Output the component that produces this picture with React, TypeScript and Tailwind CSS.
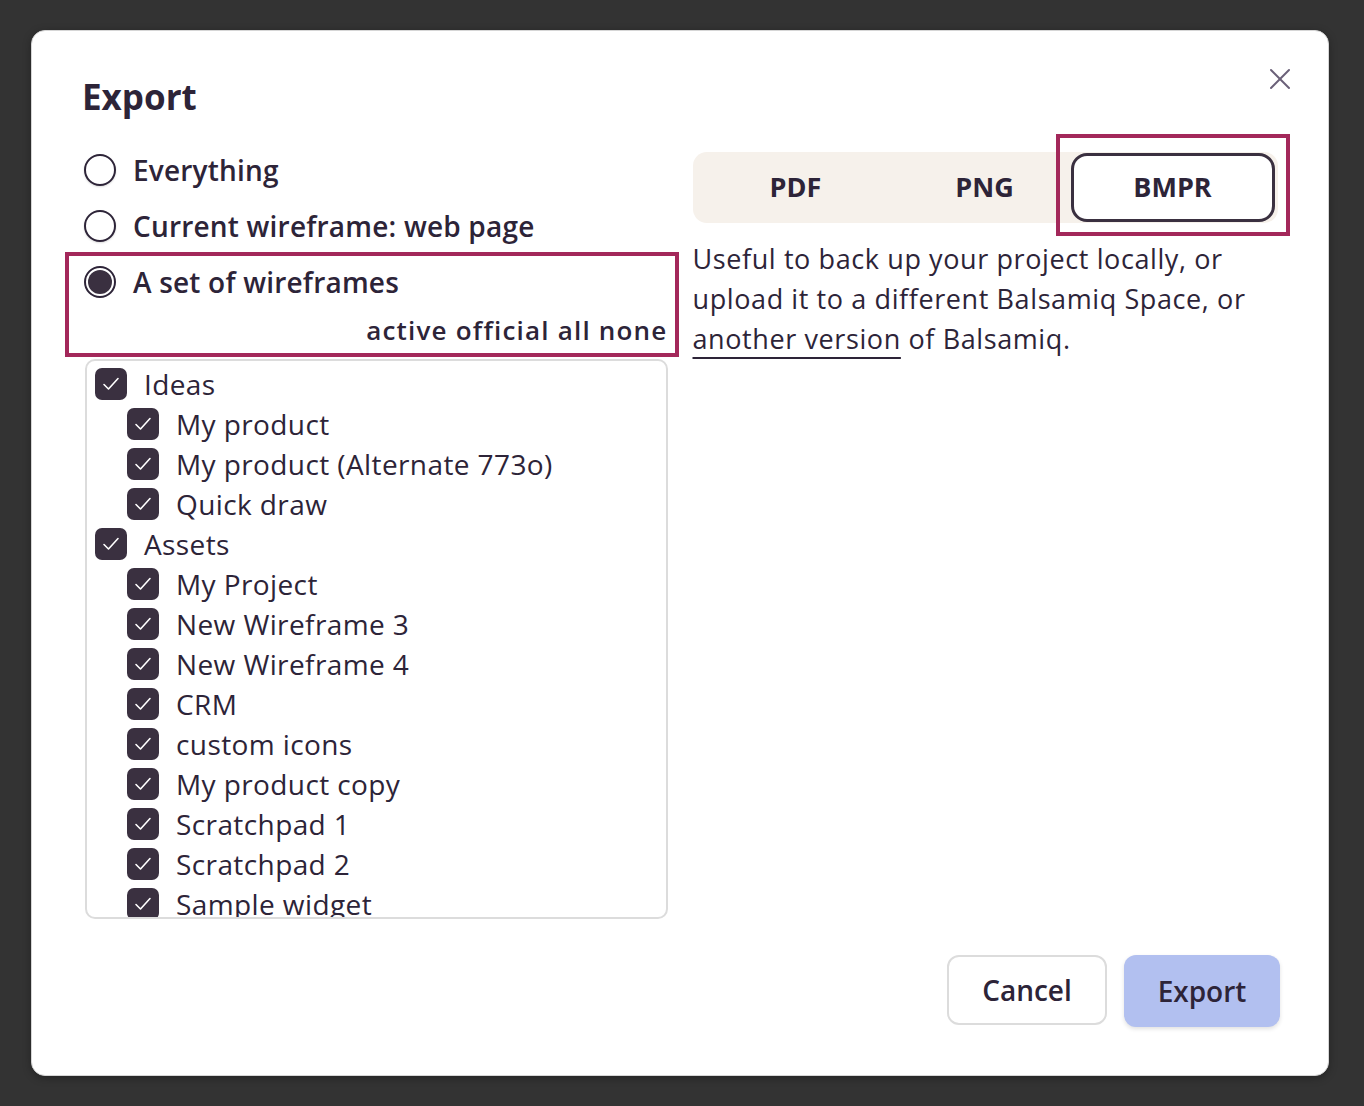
import { X } from "lucide-react";

type Item = { label: string; level: 0 | 1 };

const items: Item[] = [
  { label: "Ideas", level: 0 },
  { label: "My product", level: 1 },
  { label: "My product (Alternate 773o)", level: 1 },
  { label: "Quick draw", level: 1 },
  { label: "Assets", level: 0 },
  { label: "My Project", level: 1 },
  { label: "New Wireframe 3", level: 1 },
  { label: "New Wireframe 4", level: 1 },
  { label: "CRM", level: 1 },
  { label: "custom icons", level: 1 },
  { label: "My product copy", level: 1 },
  { label: "Scratchpad 1", level: 1 },
  { label: "Scratchpad 2", level: 1 },
  { label: "Sample widget", level: 1 },
];

function Radio({ checked, label }: { checked?: boolean; label: string }) {
  return (
    <label className="flex h-[56px] items-center gap-[17px] pl-[2px]">
      {checked ? (
        <span className="flex h-[32px] w-[32px] items-center justify-center rounded-full border-2 border-[#2d2438] bg-white">
          <span className="h-[24px] w-[24px] rounded-full bg-[#3a3040]" />
        </span>
      ) : (
        <span className="h-[32px] w-[32px] rounded-full border-2 border-[#2d2438] bg-white shadow-[0_1px_2px_rgba(0,0,0,0.15)]" />
      )}
      <span className="text-[28px] font-semibold tracking-[0.2px] text-[#2d2438]">{label}</span>
    </label>
  );
}

function Check({ item }: { item: Item }) {
  return (
    <div className={`flex h-[40px] items-center gap-[17px] ${item.level === 1 ? "pl-[40px]" : "pl-[8px]"}`}>
      <span className="flex h-[32px] w-[32px] shrink-0 items-center justify-center rounded-[7px] bg-[#3a3040]">
        <svg width="24" height="24" viewBox="0 0 24 24" fill="none" stroke="white" strokeWidth="1.6" strokeLinecap="round" strokeLinejoin="round">
          <path d="M5 12.5l4.5 4.5L19 6.5" />
        </svg>
      </span>
      <span className="text-[28px] tracking-[0.4px] text-[#2d2438]">{item.label}</span>
    </div>
  );
}

export default function App() {
  return (
    <div className="h-[1106px] bg-[#333333] pb-[30px] pl-[31px] pr-[35px] pt-[30px] font-['Open_Sans',sans-serif]">
      <div className="relative flex h-full flex-col rounded-[14px] border border-[#d6d6d6] bg-white px-[50px] pb-[48px] pt-[38px] shadow-[0_2px_8px_rgba(0,0,0,0.3)]">
        <button className="absolute right-[30px] top-[30px] text-[#6a6078]">
          <X size={36} strokeWidth={1.3} />
        </button>

        <h1 className="text-[35px] font-bold leading-[56px] text-[#2d2438]">Export</h1>

        <div className="mt-[17px] grid grid-cols-2 gap-[25px]">
          <div className="flex flex-col">
            <Radio label="Everything" />
            <Radio label="Current wireframe: web page" />
            <Radio checked label="A set of wireframes" />
            <div className="flex h-[40px] items-center justify-end text-[26px] font-semibold tracking-[1.2px] text-[#2d2438]">
              active official all none
            </div>
            <div className="ml-[3px] mt-[9px] h-[560px] overflow-hidden rounded-[10px] border-2 border-[#dcdcdc] pt-[3px]">
              {items.map((it, i) => (
                <Check key={i} item={it} />
              ))}
            </div>
          </div>

          <div className="flex flex-col pt-[10px]">
            <div className="flex h-[71px] items-center rounded-[14px] bg-[#f6f1eb] text-[27px] font-bold text-[#2d2438]">
              <div className="flex w-[206px] justify-center">PDF</div>
              <div className="flex w-[172px] justify-center">PNG</div>
              <div className="flex h-[69px] w-[204px] items-center justify-center rounded-[16px] border-[3px] border-[#3a3040] bg-white">
                BMPR
              </div>
            </div>
            <p className="mt-[16px] text-[27px] leading-[40px] tracking-[0.6px] text-[#2d2438]">
              Useful to back up your project locally, or upload it to a different Balsamiq Space, or{" "}
              <span className="underline decoration-[2px] underline-offset-[8px]">another version</span> of Balsamiq.
            </p>
          </div>
        </div>

        <div className="-mr-[2px] mt-auto flex justify-end gap-[17px]">
          <button className="h-[70px] w-[160px] rounded-[12px] border-2 border-[#dcdcdc] bg-white text-[28px] font-semibold text-[#2d2438]">
            Cancel
          </button>
          <button className="h-[72px] w-[156px] rounded-[12px] bg-[#b2c0f0] text-[28px] font-semibold text-[#2d2438] shadow-[0_2px_4px_rgba(0,0,0,0.12)]">
            Export
          </button>
        </div>

        {/* annotation boxes */}
        <div className="pointer-events-none absolute left-[33px] top-[221px] h-[105px] w-[614px] border-4 border-[#a3285a]" />
        <div className="pointer-events-none absolute left-[1024px] top-[103px] h-[102px] w-[234px] border-4 border-[#a3285a]" />
      </div>
    </div>
  );
}
